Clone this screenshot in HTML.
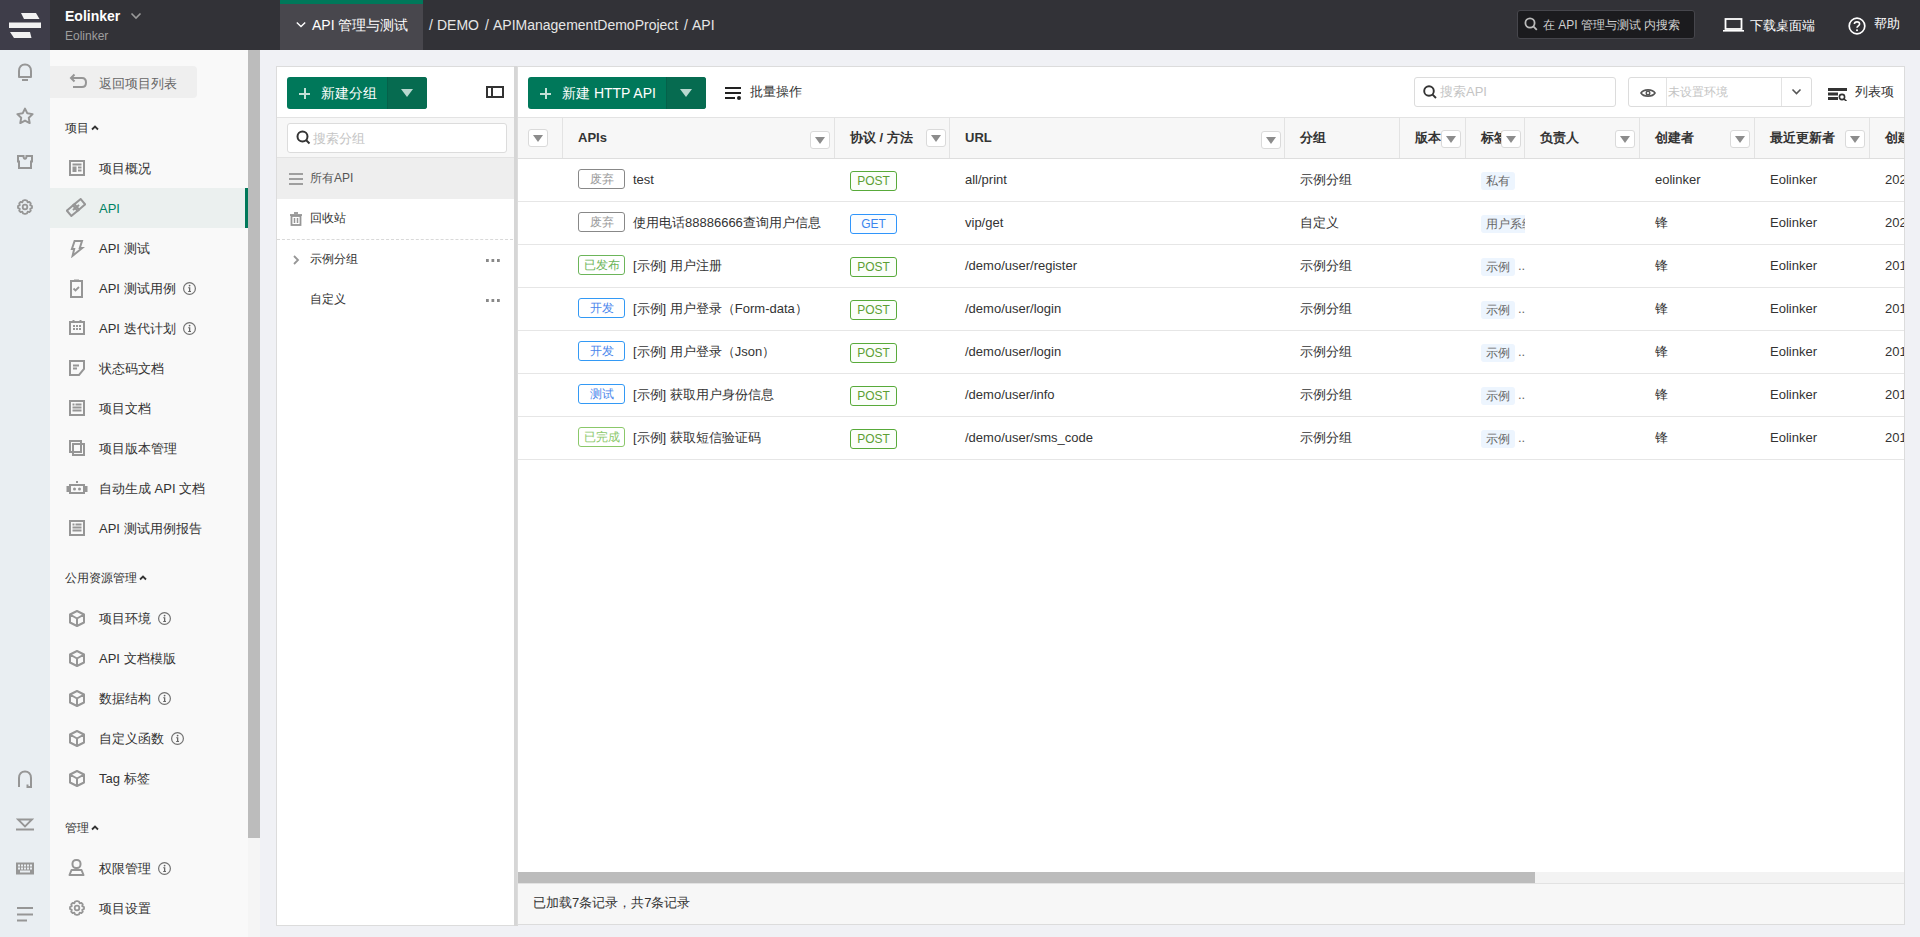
<!DOCTYPE html>
<html><head><meta charset="utf-8">
<style>
*{box-sizing:border-box;margin:0;padding:0}
html,body{width:1920px;height:937px;overflow:hidden;background:#f0f1f5;font-family:"Liberation Sans",sans-serif;color:#333;font-size:13px}
.abs{position:absolute}
svg{display:block}
/* header */
#hdr{position:absolute;left:0;top:0;width:1920px;height:50px;background:#323237}
#logo{position:absolute;left:0;top:0;width:50px;height:50px;background:#3e3d49}
.wt{color:#fff;white-space:nowrap}
/* icon bar */
#ibar{position:absolute;left:0;top:50px;width:50px;height:887px;background:#e9eef2}
#side{position:absolute;left:50px;top:50px;width:198px;height:887px;background:#f9f9f9}
#sscroll{position:absolute;left:248px;top:50px;width:12px;height:887px;background:#f5f5f5}
#sthumb{position:absolute;left:248px;top:50px;width:12px;height:788px;background:#bcbcbc}
.si{position:absolute;left:0;width:198px;height:40px}
.si .ic{position:absolute;left:18px;top:12px;width:16px;height:16px}
.si .tx{position:absolute;left:49px;top:0;line-height:40px;font-size:13px;color:#333;white-space:nowrap}
.sh{position:absolute;left:15px;font-size:12px;color:#333;white-space:nowrap}
.info{display:inline-block;vertical-align:middle;position:relative;margin-left:7px;top:-1px;width:13px;height:13px}
/* panels */
.panel{position:absolute;background:#fff;border:1px solid #dcdcdc}
.btn{position:absolute;height:32px;background:#00785a;border-radius:3px;color:#fff}
.btn .dd{position:absolute;right:0;top:0;width:40px;height:32px;background:#066b50;border-radius:0 3px 3px 0;border-left:1px solid #05614a}
.tri{position:absolute;width:0;height:0;border-left:6px solid transparent;border-right:6px solid transparent;border-top:8px solid #b8d8cf}
.plus{position:absolute;width:11px;height:11px}
.plus:before{content:"";position:absolute;left:0;top:4.5px;width:11px;height:2px;background:#c4e0d7}
.plus:after{content:"";position:absolute;left:4.5px;top:0;width:2px;height:11px;background:#c4e0d7}
.gi{position:absolute;left:0;width:237px;height:40px;font-size:12px;color:#333}
.gi .tx{position:absolute;left:33px;line-height:40px}
.dots{position:absolute;left:210px;top:19px;width:14px;height:3px;background:radial-gradient(circle at 1.5px 1.5px,#888 1.5px,transparent 1.6px) 0 0/5.5px 3px repeat-x}
/* table */
.th{position:absolute;top:-1px;height:41px;font-size:13px;font-weight:bold;color:#333;line-height:41px;white-space:nowrap}
.sep{position:absolute;top:0;width:1px;height:41px;background:#e3e3e3}
.fb{position:absolute;width:20px;height:18px;background:#fff;border:1px solid #dadada;border-radius:3px}
.fb:after{content:"";position:absolute;left:4px;top:5px;border-left:5px solid transparent;border-right:5px solid transparent;border-top:7px solid #8c8c8c}
.row{position:absolute;left:0;width:1386px;height:43px;border-bottom:1px solid #e6e6e6}
.cell{position:absolute;top:0;line-height:42px;font-size:13px;color:#333;white-space:nowrap}
.st{position:absolute;top:11px;width:47px;height:20px;border:1px solid #888;border-radius:3px;font-size:12px;line-height:18px;text-align:center;color:#999}
.meth{position:absolute;top:12px;width:47px;height:20px;border:1px solid #58aa3a;border-radius:3px;background:#fbfefa;font-size:12px;line-height:18px;text-align:center;color:#5c9e34}
.tag{position:absolute;top:13px;height:18px;background:#edf5fe;border-radius:3px;font-size:12px;line-height:18px;color:#666;padding:0 5px;white-space:nowrap;overflow:hidden}
</style></head><body>

<!-- HEADER -->
<div id="hdr">
  <div id="logo">
    <svg width="50" height="50" viewBox="0 0 50 50">
      <polygon points="21,13 36,13 39.5,19 24,19" fill="#f2f2f2"/>
      <polygon points="9,22.5 41,22.5 41,28 9,28" fill="#f2f2f2"/>
      <polygon points="10,32 30,32 31.5,38 14,38" fill="#f2f2f2"/>
    </svg>
  </div>
  <div class="abs wt" style="left:65px;top:8px;font-size:14px;font-weight:bold;line-height:16px">Eolinker</div>
  <svg class="abs" style="left:130px;top:12px" width="12" height="8" viewBox="0 0 12 8"><polyline points="1.5,1.5 6,6 10.5,1.5" fill="none" stroke="#9a9a9a" stroke-width="1.6"/></svg>
  <div class="abs" style="left:65px;top:29px;font-size:12px;line-height:14px;color:#9e9e9e;white-space:nowrap">Eolinker</div>

  <div class="abs" style="left:280px;top:0;width:143px;height:50px;background:#48474d;border-top:4px solid #00785a"></div>
  <svg class="abs" style="left:296px;top:21px" width="10" height="7" viewBox="0 0 10 7"><polyline points="0.8,1.5 5,5.5 9.2,1.5" fill="none" stroke="#fff" stroke-width="1.4"/></svg>
  <div class="abs wt" style="left:312px;top:17px;font-size:14px;line-height:16px">API 管理与测试</div>
  <div class="abs" style="left:429px;top:17px;font-size:14px;line-height:16px;color:#e6e6e6;white-space:nowrap">/</div><div class="abs" style="left:437px;top:17px;font-size:14px;line-height:16px;color:#e6e6e6;white-space:nowrap">DEMO</div><div class="abs" style="left:485px;top:17px;font-size:14px;line-height:16px;color:#e6e6e6;white-space:nowrap">/</div><div class="abs" style="left:493px;top:17px;font-size:14px;line-height:16px;color:#e6e6e6;white-space:nowrap">APIManagementDemoProject</div><div class="abs" style="left:684px;top:17px;font-size:14px;line-height:16px;color:#e6e6e6;white-space:nowrap">/</div><div class="abs" style="left:692px;top:17px;font-size:14px;line-height:16px;color:#e6e6e6;white-space:nowrap">API</div>

  <div class="abs" style="left:1517px;top:10px;width:178px;height:29px;background:#1b1b1e;border:1px solid #46464c;border-radius:3px"></div>
  <svg class="abs" style="left:1524px;top:17px" width="14" height="14" viewBox="0 0 14 14"><circle cx="6" cy="6" r="4.6" fill="none" stroke="#bbb" stroke-width="1.8"/><line x1="9.3" y1="9.3" x2="12.8" y2="12.8" stroke="#bbb" stroke-width="1.8"/></svg>
  <div class="abs" style="left:1543px;top:18px;font-size:12px;line-height:15px;color:#d0d0d0;white-space:nowrap">在 API 管理与测试 内搜索</div>

  <svg class="abs" style="left:1723px;top:18px" width="21" height="14" viewBox="0 0 21 14"><rect x="2.5" y="1" width="16" height="10" fill="none" stroke="#fff" stroke-width="1.8"/><line x1="0" y1="12.8" x2="21" y2="12.8" stroke="#fff" stroke-width="1.6"/></svg>
  <div class="abs wt" style="left:1750px;top:18px;font-size:13px;line-height:16px;font-weight:500">下载桌面端</div>
  <svg class="abs" style="left:1848px;top:17px" width="18" height="18" viewBox="0 0 18 18"><circle cx="9" cy="9" r="7.8" fill="none" stroke="#fff" stroke-width="1.7"/><path d="M6.4,7 C6.4,4.2 11.6,4.2 11.6,7 C11.6,8.8 9,8.8 9,10.8" fill="none" stroke="#fff" stroke-width="1.6"/><circle cx="9" cy="13.3" r="1" fill="#fff"/></svg>
  <div class="abs wt" style="left:1874px;top:16px;font-size:13px;line-height:16px;font-weight:500">帮助</div>
</div>

<!-- ICON BAR -->
<div id="ibar"></div>
<svg class="abs" style="left:17px;top:63px" width="16" height="18" viewBox="0 0 16 18" fill="none" stroke="#969696" stroke-width="2"><path d="M2,14 L2,8 C2,4 4.5,1.5 8,1.5 C11.5,1.5 14,4 14,8 L14,14 Z" stroke-linejoin="round"/><line x1="5" y1="17" x2="11" y2="17"/></svg>
<svg class="abs" style="left:16px;top:107px" width="18" height="18" viewBox="0 0 18 18" fill="none" stroke="#969696" stroke-width="2"><polygon points="9.00,1.60 11.35,6.36 16.61,7.13 12.80,10.84 13.70,16.07 9.00,13.60 4.30,16.07 5.20,10.84 1.39,7.13 6.65,6.36" stroke-linejoin="round"/></svg>
<svg class="abs" style="left:17px;top:154px" width="16" height="16" viewBox="0 0 16 16" fill="none" stroke="#969696" stroke-width="2"><path d="M1,2 L6.5,2 C6.5,5.5 9.5,5.5 9.5,2 L15,2 L15,7.5 L14,7.5 L14,14 L2,14 L2,7.5 L1,7.5 Z" stroke-linejoin="miter"/></svg>
<svg class="abs" style="left:17px;top:199px" width="16" height="16" viewBox="0 0 16 16" fill="none" stroke="#969696" stroke-width="2"><path d="M8,1 L10,1.6 L10.6,3.3 L12.4,2.8 L13.8,4.3 L13.2,6.1 L15,7 L15,9 L13.2,9.9 L13.8,11.7 L12.4,13.2 L10.6,12.7 L10,14.4 L8,15 L6,14.4 L5.4,12.7 L3.6,13.2 L2.2,11.7 L2.8,9.9 L1,9 L1,7 L2.8,6.1 L2.2,4.3 L3.6,2.8 L5.4,3.3 L6,1.6 Z" stroke-width="1.8" stroke-linejoin="round"/><circle cx="8" cy="8" r="2.3" stroke-width="1.8"/></svg>
<svg class="abs" style="left:17px;top:770px" width="16" height="18" viewBox="0 0 16 18" fill="none" stroke="#969696" stroke-width="2"><path d="M2,17 L2,8 C2,4 4.5,1.5 8,1.5 C11.5,1.5 14,4 14,8 L14,17 L10.5,17 L10.5,14.5" stroke-linejoin="miter"/></svg>
<svg class="abs" style="left:16px;top:818px" width="18" height="13" viewBox="0 0 18 13" fill="none" stroke="#969696" stroke-width="2"><path d="M2,1.5 L16,1.5 L9,8.5 Z" stroke-width="1.8"/><line x1="0" y1="11.5" x2="18" y2="11.5"/></svg>
<svg class="abs" style="left:16px;top:862px" width="18" height="13" viewBox="0 0 18 13" fill="none" stroke="#969696" stroke-width="2"><rect x="0" y="0.5" width="18" height="12" fill="#969696" stroke="none"/><g fill="#e9eef2" stroke="none"><rect x="2" y="2.5" width="2" height="2"/><rect x="5" y="2.5" width="2" height="2"/><rect x="8" y="2.5" width="2" height="2"/><rect x="11" y="2.5" width="2" height="2"/><rect x="14" y="2.5" width="2" height="2"/><rect x="2" y="5.5" width="2" height="2"/><rect x="5" y="5.5" width="2" height="2"/><rect x="8" y="5.5" width="2" height="2"/><rect x="11" y="5.5" width="2" height="2"/><rect x="14" y="5.5" width="2" height="2"/><rect x="4" y="8.5" width="10" height="2"/></g></svg>
<svg class="abs" style="left:17px;top:907px" width="16" height="15" viewBox="0 0 16 15" fill="none" stroke="#969696" stroke-width="2"><line x1="0" y1="1" x2="16" y2="1"/><line x1="0" y1="7.5" x2="16" y2="7.5"/><line x1="0" y1="13.5" x2="10" y2="13.5"/></svg>


<!-- SIDEBAR -->
<div id="side"></div>
<div id="sscroll"></div>
<div id="sthumb"></div>
<div class="abs" style="left:50px;top:66px;width:147px;height:32px;background:#efefef;border-radius:0 4px 4px 0"></div>
<svg class="abs" style="left:68px;top:73px" width="20" height="16" viewBox="0 0 20 16" fill="none" stroke="#969696" stroke-width="2"><path d="M3,5 L14,5 C17.5,5 18,7 18,9.5 C18,12 17.5,14 14,14 L5,14" stroke-linejoin="round"/><polyline points="6.5,1.5 3,5 6.5,8.5" stroke-linejoin="miter"/></svg>
<div class="abs" style="left:99px;top:76px;font-size:13px;line-height:16px;color:#666;white-space:nowrap">返回项目列表</div>
<div class="abs" style="left:65px;top:121px;font-size:12px;line-height:14px;color:#333;white-space:nowrap">项目</div><svg class="abs" style="left:91px;top:125px" width="8" height="6" viewBox="0 0 8 6"><polyline points="1,4.5 4,1.5 7,4.5" fill="none" stroke="#333" stroke-width="1.8"/></svg>
<div class="abs" style="left:65px;top:571px;font-size:12px;line-height:14px;color:#333;white-space:nowrap">公用资源管理</div><svg class="abs" style="left:139px;top:575px" width="8" height="6" viewBox="0 0 8 6"><polyline points="1,4.5 4,1.5 7,4.5" fill="none" stroke="#333" stroke-width="1.8"/></svg>
<div class="abs" style="left:65px;top:821px;font-size:12px;line-height:14px;color:#333;white-space:nowrap">管理</div><svg class="abs" style="left:91px;top:825px" width="8" height="6" viewBox="0 0 8 6"><polyline points="1,4.5 4,1.5 7,4.5" fill="none" stroke="#333" stroke-width="1.8"/></svg>
<svg class="abs" style="left:69px;top:160px" width="16" height="16" viewBox="0 0 16 16" fill="none" stroke="#969696" stroke-width="2"><rect x="1" y="1" width="14" height="14"/><g fill="#969696" stroke="none"><rect x="3.5" y="3.5" width="9" height="2"/><rect x="3.5" y="6.5" width="4" height="5.5"/><rect x="9" y="6.5" width="3.5" height="2"/><rect x="9" y="9.5" width="3.5" height="2"/></g></svg>
<div class="abs" style="left:99px;top:161px;font-size:13px;line-height:16px;color:#333;white-space:nowrap">项目概况</div>
<div class="abs" style="left:50px;top:188px;width:198px;height:40px;background:#ebf0ef"></div><div class="abs" style="left:245px;top:188px;width:3px;height:40px;background:#00785a"></div>
<svg class="abs" style="left:66px;top:198px" width="20" height="19" viewBox="0 0 20 19" fill="none" stroke="#969696" stroke-width="2"><g transform="rotate(-40 10 9.5)"><rect x="1" y="6" width="10" height="7"/><rect x="9" y="6" width="10" height="7"/><line x1="6" y1="9.5" x2="14" y2="9.5"/></g></svg>
<div class="abs" style="left:99px;top:201px;font-size:13px;line-height:16px;color:#008264;white-space:nowrap">API</div>
<svg class="abs" style="left:70px;top:239px" width="15" height="19" viewBox="0 0 15 19" fill="none" stroke="#969696" stroke-width="2"><path d="M4.6,2 L12,2 L9.8,9 L12.3,9 L2.6,16.8 L4.2,10 L1.9,10 Z" stroke-linejoin="miter"/></svg>
<div class="abs" style="left:99px;top:241px;font-size:13px;line-height:16px;color:#333;white-space:nowrap">API 测试</div>
<svg class="abs" style="left:70px;top:279px" width="13" height="19" viewBox="0 0 13 19" fill="none" stroke="#969696" stroke-width="2"><rect x="1" y="2" width="11" height="16"/><rect x="4" y="0.5" width="5" height="2.5" fill="#969696" stroke="none"/><polyline points="3.5,9.5 5.5,11.5 9,8" stroke-width="1.8"/></svg>
<div class="abs" style="left:99px;top:281px;font-size:13px;line-height:16px;color:#333;white-space:nowrap">API 测试用例<span class="info"><svg width="13" height="13" viewBox="0 0 13 13"><circle cx="6.5" cy="6.5" r="5.9" fill="none" stroke="#727272" stroke-width="1.2"/><circle cx="6.6" cy="3.6" r="0.9" fill="#666"/><path d="M5.2,5.3 L7.3,5.3 L7.3,9 L8,9 L8,10 L5.2,10 L5.2,9 L6,9 L6,6.2 L5.2,6.2 Z" fill="#666"/></svg></span></div>
<svg class="abs" style="left:69px;top:320px" width="16" height="15" viewBox="0 0 16 15" fill="none" stroke="#969696" stroke-width="2"><rect x="1" y="2" width="14" height="12"/><g fill="#969696" stroke="none"><rect x="3.5" y="0" width="2" height="2"/><rect x="10.5" y="0" width="2" height="2"/><rect x="4" y="5" width="2" height="2"/><rect x="7" y="5" width="2" height="2"/><rect x="10" y="5" width="2" height="2"/><rect x="4" y="8" width="2" height="2"/><rect x="7" y="8" width="2" height="2"/><rect x="10" y="8" width="2" height="2"/></g></svg>
<div class="abs" style="left:99px;top:321px;font-size:13px;line-height:16px;color:#333;white-space:nowrap">API 迭代计划<span class="info"><svg width="13" height="13" viewBox="0 0 13 13"><circle cx="6.5" cy="6.5" r="5.9" fill="none" stroke="#727272" stroke-width="1.2"/><circle cx="6.6" cy="3.6" r="0.9" fill="#666"/><path d="M5.2,5.3 L7.3,5.3 L7.3,9 L8,9 L8,10 L5.2,10 L5.2,9 L6,9 L6,6.2 L5.2,6.2 Z" fill="#666"/></svg></span></div>
<svg class="abs" style="left:69px;top:360px" width="16" height="16" viewBox="0 0 16 16" fill="none" stroke="#969696" stroke-width="2"><path d="M1,1 L15,1 L15,9 L10,15 L1,15 Z" stroke-linejoin="miter"/><g fill="#969696" stroke="none"><rect x="4" y="4.5" width="6" height="2"/><rect x="4" y="7.5" width="4" height="2"/></g></svg>
<div class="abs" style="left:99px;top:361px;font-size:13px;line-height:16px;color:#333;white-space:nowrap">状态码文档</div>
<svg class="abs" style="left:69px;top:400px" width="16" height="16" viewBox="0 0 16 16" fill="none" stroke="#969696" stroke-width="2"><rect x="1" y="1" width="14" height="14"/><g fill="#969696" stroke="none"><rect x="3.5" y="3.5" width="2" height="2"/><rect x="6.5" y="3.5" width="6" height="2"/><rect x="3.5" y="6.5" width="9" height="2"/><rect x="3.5" y="9.5" width="9" height="2"/></g></svg>
<div class="abs" style="left:99px;top:401px;font-size:13px;line-height:16px;color:#333;white-space:nowrap">项目文档</div>
<svg class="abs" style="left:69px;top:440px" width="16" height="16" viewBox="0 0 16 16" fill="none" stroke="#969696" stroke-width="2"><rect x="1" y="1" width="11" height="11"/><rect x="4" y="4" width="11" height="11"/></svg>
<div class="abs" style="left:99px;top:441px;font-size:13px;line-height:16px;color:#333;white-space:nowrap">项目版本管理</div>
<svg class="abs" style="left:66px;top:481px" width="22" height="13" viewBox="0 0 22 13" fill="none" stroke="#969696" stroke-width="2"><rect x="4" y="4" width="14" height="8"/><g fill="#969696" stroke="none"><rect x="0.5" y="5" width="3" height="6"/><rect x="18.5" y="5" width="3" height="6"/><rect x="10" y="0" width="2" height="2"/><circle cx="8.5" cy="8" r="1.5"/><circle cx="13.5" cy="8" r="1.5"/></g></svg>
<div class="abs" style="left:99px;top:481px;font-size:13px;line-height:16px;color:#333;white-space:nowrap">自动生成 API 文档</div>
<svg class="abs" style="left:69px;top:520px" width="16" height="16" viewBox="0 0 16 16" fill="none" stroke="#969696" stroke-width="2"><rect x="1" y="1" width="14" height="14"/><g fill="#969696" stroke="none"><rect x="3.5" y="3.5" width="2" height="2"/><rect x="6.5" y="3.5" width="6" height="2"/><rect x="3.5" y="6.5" width="9" height="2"/><rect x="3.5" y="9.5" width="9" height="2"/></g></svg>
<div class="abs" style="left:99px;top:521px;font-size:13px;line-height:16px;color:#333;white-space:nowrap">API 测试用例报告</div>
<svg class="abs" style="left:69px;top:610px" width="16" height="17" viewBox="0 0 16 17" fill="none" stroke="#969696" stroke-width="2"><path d="M8,1 L15,4.5 L15,12.5 L8,16 L1,12.5 L1,4.5 Z M1,4.5 L8,8.5 L15,4.5 M8,8.5 L8,16" stroke-linejoin="round"/></svg>
<div class="abs" style="left:99px;top:611px;font-size:13px;line-height:16px;color:#333;white-space:nowrap">项目环境<span class="info"><svg width="13" height="13" viewBox="0 0 13 13"><circle cx="6.5" cy="6.5" r="5.9" fill="none" stroke="#727272" stroke-width="1.2"/><circle cx="6.6" cy="3.6" r="0.9" fill="#666"/><path d="M5.2,5.3 L7.3,5.3 L7.3,9 L8,9 L8,10 L5.2,10 L5.2,9 L6,9 L6,6.2 L5.2,6.2 Z" fill="#666"/></svg></span></div>
<svg class="abs" style="left:69px;top:650px" width="16" height="17" viewBox="0 0 16 17" fill="none" stroke="#969696" stroke-width="2"><path d="M8,1 L15,4.5 L15,12.5 L8,16 L1,12.5 L1,4.5 Z M1,4.5 L8,8.5 L15,4.5 M8,8.5 L8,16" stroke-linejoin="round"/></svg>
<div class="abs" style="left:99px;top:651px;font-size:13px;line-height:16px;color:#333;white-space:nowrap">API 文档模版</div>
<svg class="abs" style="left:69px;top:690px" width="16" height="17" viewBox="0 0 16 17" fill="none" stroke="#969696" stroke-width="2"><path d="M8,1 L15,4.5 L15,12.5 L8,16 L1,12.5 L1,4.5 Z M1,4.5 L8,8.5 L15,4.5 M8,8.5 L8,16" stroke-linejoin="round"/></svg>
<div class="abs" style="left:99px;top:691px;font-size:13px;line-height:16px;color:#333;white-space:nowrap">数据结构<span class="info"><svg width="13" height="13" viewBox="0 0 13 13"><circle cx="6.5" cy="6.5" r="5.9" fill="none" stroke="#727272" stroke-width="1.2"/><circle cx="6.6" cy="3.6" r="0.9" fill="#666"/><path d="M5.2,5.3 L7.3,5.3 L7.3,9 L8,9 L8,10 L5.2,10 L5.2,9 L6,9 L6,6.2 L5.2,6.2 Z" fill="#666"/></svg></span></div>
<svg class="abs" style="left:69px;top:730px" width="16" height="17" viewBox="0 0 16 17" fill="none" stroke="#969696" stroke-width="2"><path d="M8,1 L15,4.5 L15,12.5 L8,16 L1,12.5 L1,4.5 Z M1,4.5 L8,8.5 L15,4.5 M8,8.5 L8,16" stroke-linejoin="round"/></svg>
<div class="abs" style="left:99px;top:731px;font-size:13px;line-height:16px;color:#333;white-space:nowrap">自定义函数<span class="info"><svg width="13" height="13" viewBox="0 0 13 13"><circle cx="6.5" cy="6.5" r="5.9" fill="none" stroke="#727272" stroke-width="1.2"/><circle cx="6.6" cy="3.6" r="0.9" fill="#666"/><path d="M5.2,5.3 L7.3,5.3 L7.3,9 L8,9 L8,10 L5.2,10 L5.2,9 L6,9 L6,6.2 L5.2,6.2 Z" fill="#666"/></svg></span></div>
<svg class="abs" style="left:69px;top:770px" width="16" height="17" viewBox="0 0 16 17" fill="none" stroke="#969696" stroke-width="2"><path d="M8,1 L15,4.5 L15,12.5 L8,16 L1,12.5 L1,4.5 Z M1,4.5 L8,8.5 L15,4.5 M8,8.5 L8,16" stroke-linejoin="round"/></svg>
<div class="abs" style="left:99px;top:771px;font-size:13px;line-height:16px;color:#333;white-space:nowrap">Tag 标签</div>
<svg class="abs" style="left:68px;top:859px" width="17" height="17" viewBox="0 0 17 17" fill="none" stroke="#969696" stroke-width="2"><rect x="4.5" y="1" width="8" height="8" rx="3.5"/><path d="M1.5,16 L3.5,11 L13.5,11 L15.5,16 Z" stroke-linejoin="round"/></svg>
<div class="abs" style="left:99px;top:861px;font-size:13px;line-height:16px;color:#333;white-space:nowrap">权限管理<span class="info"><svg width="13" height="13" viewBox="0 0 13 13"><circle cx="6.5" cy="6.5" r="5.9" fill="none" stroke="#727272" stroke-width="1.2"/><circle cx="6.6" cy="3.6" r="0.9" fill="#666"/><path d="M5.2,5.3 L7.3,5.3 L7.3,9 L8,9 L8,10 L5.2,10 L5.2,9 L6,9 L6,6.2 L5.2,6.2 Z" fill="#666"/></svg></span></div>
<svg class="abs" style="left:69px;top:900px" width="16" height="16" viewBox="0 0 16 16" fill="none" stroke="#969696" stroke-width="2"><path d="M8,1 L10,1.6 L10.6,3.3 L12.4,2.8 L13.8,4.3 L13.2,6.1 L15,7 L15,9 L13.2,9.9 L13.8,11.7 L12.4,13.2 L10.6,12.7 L10,14.4 L8,15 L6,14.4 L5.4,12.7 L3.6,13.2 L2.2,11.7 L2.8,9.9 L1,9 L1,7 L2.8,6.1 L2.2,4.3 L3.6,2.8 L5.4,3.3 L6,1.6 Z" stroke-width="1.8" stroke-linejoin="round"/><circle cx="8" cy="8" r="2.3" stroke-width="1.8"/></svg>
<div class="abs" style="left:99px;top:901px;font-size:13px;line-height:16px;color:#333;white-space:nowrap">项目设置</div>


<!-- GROUP PANEL -->
<div class="panel" style="left:276px;top:66px;width:239px;height:860px"></div>
<div class="abs" style="left:514px;top:66px;width:4px;height:860px;background:#d6d6d6"></div>

<div class="btn" style="left:287px;top:77px;width:140px"><div class="dd"></div></div>
<div class="plus" style="left:299px;top:88px"></div>
<div class="abs wt" style="left:321px;top:85px;font-size:14px;line-height:16px">新建分组</div>
<div class="tri" style="left:401px;top:89px"></div>
<svg class="abs" style="left:486px;top:86px" width="18" height="12" viewBox="0 0 18 12" fill="none" stroke="#333" stroke-width="2"><rect x="1" y="1" width="16" height="10"/><line x1="6" y1="1" x2="6" y2="11"/></svg>
<div class="abs" style="left:277px;top:117px;width:237px;height:1px;background:#e3e3e3"></div>
<div class="abs" style="left:277px;top:118px;width:237px;height:40px;background:#f7f7f7;border-bottom:1px solid #e3e3e3"></div>
<div class="abs" style="left:287px;top:123px;width:220px;height:30px;background:#fff;border:1px solid #dcdcdc;border-radius:3px"></div>
<svg class="abs" style="left:296px;top:130px" width="15" height="15" viewBox="0 0 15 15" fill="none" stroke="#333" stroke-width="2"><circle cx="6.5" cy="6.5" r="5"/><line x1="10" y1="10" x2="13.5" y2="13.5"/></svg>
<div class="abs" style="left:313px;top:131px;font-size:13px;line-height:15px;color:#c4c4c4;white-space:nowrap">搜索分组</div>
<div class="abs" style="left:277px;top:158px;width:237px;height:41px;background:#eeeeee"></div>
<svg class="abs" style="left:289px;top:173px" width="14" height="12" viewBox="0 0 14 12" fill="none" stroke="#969696" stroke-width="1.8"><line x1="0" y1="1" x2="14" y2="1"/><line x1="0" y1="6" x2="14" y2="6"/><line x1="0" y1="11" x2="14" y2="11"/></svg>
<div class="abs" style="left:310px;top:171px;font-size:12px;line-height:15px;color:#555;white-space:nowrap">所有API</div>
<svg class="abs" style="left:290px;top:212px" width="12" height="14" viewBox="0 0 12 14" fill="none" stroke="#969696" stroke-width="1.8"><rect x="1.5" y="4" width="9" height="9"/><line x1="0" y1="3" x2="12" y2="3"/><line x1="4" y1="1" x2="8" y2="1"/><line x1="4.5" y1="6" x2="4.5" y2="11" stroke-width="1.5"/><line x1="7.5" y1="6" x2="7.5" y2="11" stroke-width="1.5"/></svg>
<div class="abs" style="left:310px;top:211px;font-size:12px;line-height:15px;color:#333;white-space:nowrap">回收站</div>
<div class="abs" style="left:277px;top:239px;width:236px;height:1px;border-top:1px dashed #d9d9d9"></div>
<svg class="abs" style="left:292px;top:254px" width="8" height="12" viewBox="0 0 8 12" fill="none" stroke="#969696" stroke-width="1.8"><polyline points="2,2 6,6 2,10"/></svg>
<div class="abs" style="left:310px;top:252px;font-size:12px;line-height:15px;color:#333;white-space:nowrap">示例分组</div>
<div class="dots" style="left:486px;top:259px"></div>
<div class="abs" style="left:310px;top:292px;font-size:12px;line-height:15px;color:#333;white-space:nowrap">自定义</div>
<div class="dots" style="left:486px;top:299px"></div>
<!-- TABLE PANEL -->
<div class="panel" style="left:517px;top:66px;width:1388px;height:859px"></div>

<div class="btn" style="left:528px;top:77px;width:178px"><div class="dd"></div></div>
<div class="plus" style="left:540px;top:88px"></div>
<div class="abs wt" style="left:562px;top:85px;font-size:14px;line-height:16px">新建 HTTP API</div>
<div class="tri" style="left:680px;top:89px"></div>
<svg class="abs" style="left:725px;top:86px" width="17" height="14" viewBox="0 0 17 14" fill="none" stroke="#222" stroke-width="2"><line x1="0" y1="2" x2="16" y2="2"/><line x1="0" y1="7" x2="16" y2="7"/><line x1="0" y1="12" x2="10" y2="12"/><circle cx="14" cy="12" r="2" fill="#222" stroke="none"/></svg>
<div class="abs" style="left:750px;top:84px;font-size:13px;line-height:16px;color:#333;white-space:nowrap">批量操作</div>
<div class="abs" style="left:1414px;top:77px;width:202px;height:30px;background:#fff;border:1px solid #dcdcdc;border-radius:3px"></div>
<svg class="abs" style="left:1423px;top:85px" width="14" height="14" viewBox="0 0 14 14" fill="none" stroke="#333" stroke-width="1.9"><circle cx="6" cy="6" r="4.8"/><line x1="9.3" y1="9.3" x2="13" y2="13"/></svg>
<div class="abs" style="left:1440px;top:84px;font-size:13px;line-height:16px;color:#c4c4c4;white-space:nowrap">搜索API</div>
<div class="abs" style="left:1628px;top:77px;width:184px;height:30px;background:#fff;border:1px solid #dcdcdc;border-radius:3px"></div>
<div class="abs" style="left:1666px;top:78px;width:1px;height:28px;background:#e3e3e3"></div>
<div class="abs" style="left:1781px;top:78px;width:1px;height:28px;background:#e3e3e3"></div>
<svg class="abs" style="left:1640px;top:87px" width="16" height="12" viewBox="0 0 16 12" fill="none" stroke="#555" stroke-width="1.6"><path d="M1,6 C3.5,1.8 12.5,1.8 15,6 C12.5,10.2 3.5,10.2 1,6 Z" stroke-width="1.6"/><circle cx="8" cy="6" r="1.8" stroke-width="1.4"/></svg>
<div class="abs" style="left:1668px;top:84px;font-size:12px;line-height:16px;color:#c4c4c4;white-space:nowrap">未设置环境</div>
<svg class="abs" style="left:1791px;top:88px" width="11" height="8" viewBox="0 0 11 8" fill="none" stroke="#555" stroke-width="1.6"><polyline points="1.5,1.5 5.5,5.5 9.5,1.5"/></svg>
<svg class="abs" style="left:1828px;top:87px" width="20" height="14" viewBox="0 0 20 14" fill="none" stroke="#969696" stroke-width="2"><g fill="#333" stroke="none"><rect x="0" y="1" width="19" height="3"/><rect x="0" y="5.5" width="10" height="3"/><rect x="0" y="10" width="10" height="3"/></g><circle cx="14" cy="10" r="2.6" stroke="#333" stroke-width="1.6"/><line x1="16" y1="12" x2="18.5" y2="14" stroke="#333" stroke-width="1.6"/></svg>
<div class="abs" style="left:1855px;top:84px;font-size:13px;line-height:16px;color:#333;white-space:nowrap">列表项</div>
<div class="abs" style="left:518px;top:117px;width:1386px;height:42px;background:#f7f7f7;border-top:1px solid #e3e3e3;border-bottom:1px solid #dedede;overflow:hidden">
<div class="sep" style="left:44px"></div><div class="sep" style="left:316px"></div><div class="sep" style="left:431px"></div><div class="sep" style="left:766px"></div><div class="sep" style="left:881px"></div><div class="sep" style="left:947px"></div><div class="sep" style="left:1006px"></div><div class="sep" style="left:1121px"></div><div class="sep" style="left:1236px"></div><div class="sep" style="left:1351px"></div><div class="th" style="left:60px">APIs</div><div class="th" style="left:332px">协议 / 方法</div><div class="th" style="left:447px">URL</div><div class="th" style="left:782px">分组</div><div class="th" style="left:897px">版本</div><div class="th" style="left:963px">标签</div><div class="th" style="left:1022px">负责人</div><div class="th" style="left:1137px">创建者</div><div class="th" style="left:1252px">最近更新者</div><div class="th" style="left:1367px">创建时间</div><div class="fb" style="left:10px;top:11px"></div><div class="fb" style="left:292px;top:13px"></div><div class="fb" style="left:408px;top:11px"></div><div class="fb" style="left:743px;top:13px"></div><div class="fb" style="left:923px;top:12px"></div><div class="fb" style="left:983px;top:12px"></div><div class="fb" style="left:1097px;top:12px"></div><div class="fb" style="left:1212px;top:12px"></div><div class="fb" style="left:1327px;top:12px"></div></div>
<div class="abs" style="left:518px;top:159px;width:1386px;height:713px;overflow:hidden">
<div class="row" style="top:0px"><div class="st" style="left:60px;top:10px;border-color:#888;color:#999">废弃</div><div class="cell" style="left:115px">test</div><div class="meth" style="left:332px">POST</div><div class="cell" style="left:447px">all/print</div><div class="cell" style="left:782px">示例分组</div><div class="tag" style="left:963px">私有</div><div class="cell" style="left:1137px">eolinker</div><div class="cell" style="left:1252px">Eolinker</div><div class="cell" style="left:1367px">202</div></div>
<div class="row" style="top:43px"><div class="st" style="left:60px;top:10px;border-color:#888;color:#999">废弃</div><div class="cell" style="left:115px">使用电话88886666查询用户信息</div><div class="meth" style="left:332px;border-color:#2f95fb;background:#fbfdff;color:#3a86ee">GET</div><div class="cell" style="left:447px">vip/get</div><div class="cell" style="left:782px">自定义</div><div class="tag" style="left:963px;width:44px;border-radius:3px 0 0 3px">用户系统</div><div class="cell" style="left:1137px">锋</div><div class="cell" style="left:1252px">Eolinker</div><div class="cell" style="left:1367px">202</div></div>
<div class="row" style="top:86px"><div class="st" style="left:60px;top:10px;border-color:#6cb55a;color:#6cb55a">已发布</div><div class="cell" style="left:115px">[示例] 用户注册</div><div class="meth" style="left:332px">POST</div><div class="cell" style="left:447px">/demo/user/register</div><div class="cell" style="left:782px">示例分组</div><div class="tag" style="left:963px">示例</div><div class="cell" style="left:1000px;color:#666">..</div><div class="cell" style="left:1137px">锋</div><div class="cell" style="left:1252px">Eolinker</div><div class="cell" style="left:1367px">201</div></div>
<div class="row" style="top:129px"><div class="st" style="left:60px;top:10px;border-color:#3399f5;color:#4a86ec">开发</div><div class="cell" style="left:115px">[示例] 用户登录（Form-data）</div><div class="meth" style="left:332px">POST</div><div class="cell" style="left:447px">/demo/user/login</div><div class="cell" style="left:782px">示例分组</div><div class="tag" style="left:963px">示例</div><div class="cell" style="left:1000px;color:#666">..</div><div class="cell" style="left:1137px">锋</div><div class="cell" style="left:1252px">Eolinker</div><div class="cell" style="left:1367px">201</div></div>
<div class="row" style="top:172px"><div class="st" style="left:60px;top:10px;border-color:#3399f5;color:#4a86ec">开发</div><div class="cell" style="left:115px">[示例] 用户登录（Json）</div><div class="meth" style="left:332px">POST</div><div class="cell" style="left:447px">/demo/user/login</div><div class="cell" style="left:782px">示例分组</div><div class="tag" style="left:963px">示例</div><div class="cell" style="left:1000px;color:#666">..</div><div class="cell" style="left:1137px">锋</div><div class="cell" style="left:1252px">Eolinker</div><div class="cell" style="left:1367px">201</div></div>
<div class="row" style="top:215px"><div class="st" style="left:60px;top:10px;border-color:#3399f5;color:#4a86ec">测试</div><div class="cell" style="left:115px">[示例] 获取用户身份信息</div><div class="meth" style="left:332px">POST</div><div class="cell" style="left:447px">/demo/user/info</div><div class="cell" style="left:782px">示例分组</div><div class="tag" style="left:963px">示例</div><div class="cell" style="left:1000px;color:#666">..</div><div class="cell" style="left:1137px">锋</div><div class="cell" style="left:1252px">Eolinker</div><div class="cell" style="left:1367px">201</div></div>
<div class="row" style="top:258px"><div class="st" style="left:60px;top:10px;border-color:#8bc86a;color:#8bc86a">已完成</div><div class="cell" style="left:115px">[示例] 获取短信验证码</div><div class="meth" style="left:332px">POST</div><div class="cell" style="left:447px">/demo/user/sms_code</div><div class="cell" style="left:782px">示例分组</div><div class="tag" style="left:963px">示例</div><div class="cell" style="left:1000px;color:#666">..</div><div class="cell" style="left:1137px">锋</div><div class="cell" style="left:1252px">Eolinker</div><div class="cell" style="left:1367px">201</div></div>
</div>
<div class="abs" style="left:518px;top:872px;width:1386px;height:11px;background:#f3f3f3"></div><div class="abs" style="left:518px;top:883px;width:1386px;height:1px;background:#e2e2e2"></div>
<div class="abs" style="left:518px;top:872px;width:1017px;height:11px;background:#bcbcbc"></div>
<div class="abs" style="left:518px;top:884px;width:1386px;height:40px;background:#f7f7f7"></div>
<div class="abs" style="left:533px;top:895px;font-size:13px;line-height:16px;color:#333;white-space:nowrap">已加载7条记录，共7条记录</div>
</body></html>
